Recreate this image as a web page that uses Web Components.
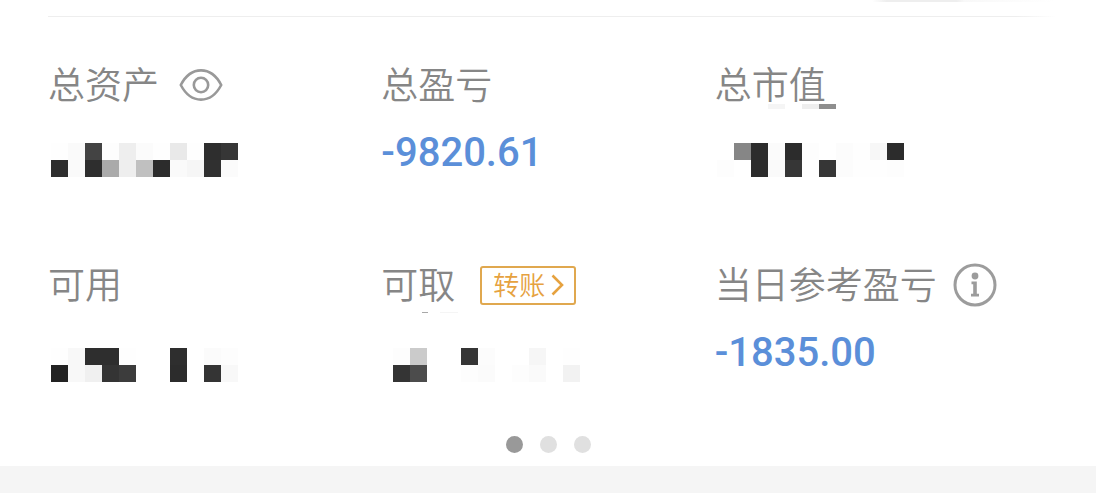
<!DOCTYPE html>
<html lang="zh-CN">
<head>
<meta charset="utf-8">
<meta name="viewport" content="width=device-width, initial-scale=1">
<title>资产概览</title>
<style>
  body { margin: 0; background: #f5f5f5; font-family: "Noto Sans CJK SC", sans-serif; color: #868686; }
</style>
</head>
<body>
<account-panel>
  <asset-item>
    <span slot="label">总资产</span>
    <eye-toggle slot="action"></eye-toggle>
    <masked-amount style="--inset: 3px" rows="fe fa 43 fd ee fb fe e9 fe 2e 36|2e fa 2e aa ee c0 2c fa f6 30 fb"></masked-amount>
  </asset-item>
  <asset-item>
    <span slot="label">总盈亏</span>
    <money-amount>-9820.61</money-amount>
  </asset-item>
  <asset-item>
    <span slot="label">总市值</span>
    <mask-edge slot="overlay" style="--left: 53px; --top: 41px" cells="f5 ff ee 8e"></mask-edge>
    <masked-amount style="--inset: 2px" rows="ff 86 2c fb 2c fd ff fc fe f7 2c|fd ff 2c fa 36 fe 36 fc fe fe fd"></masked-amount>
  </asset-item>
  <asset-item>
    <span slot="label">可用</span>
    <masked-amount style="--inset: 3px; --drop: 17px" rows="fe f8 2e 2e fe ff ff 2e ff fb fd|22 f8 f0 34 3c ff ff 2c ff 34 f8"></masked-amount>
  </asset-item>
  <asset-item>
    <span slot="label">可取</span>
    <transfer-button slot="action">转账</transfer-button>
    <mask-edge slot="overlay" style="--left: 41px; --top: 49px; --cell: 6px; --thick: 1px" cells="a8 ff ff f5 f5 f5"></mask-edge>
    <masked-amount style="--inset: 12px; --drop: 17px" rows="fd cb ff ff 35 fc ff ff f6 ff fe|34 4c ff ff fd fb ff fd fa ff f2"></masked-amount>
  </asset-item>
  <asset-item>
    <span slot="label">当日参考盈亏</span>
    <info-button slot="action"></info-button>
    <money-amount>-1835.00</money-amount>
  </asset-item>
</account-panel>

<script>
  const attach = (host, html) => {
    const root = host.attachShadow({ mode: 'open' });
    const template = document.createElement('template');
    template.innerHTML = html;
    root.append(template.content.cloneNode(true));
    return root;
  };

  customElements.define('account-panel', class extends HTMLElement {
    constructor() {
      super();
      attach(this, `
        <style>
          :host { display: block; background: #fff; padding-bottom: 13px; }
          header { padding: 0 40px 0 48px; }
          .tab { height: 2px; width: 184px; margin: 0 0 14px auto;
            background: linear-gradient(90deg, #fff, #eee 8%, #eee 46%, #f8f8f8 50%, #fff); }
          hr { border: 0; margin: 0; height: 1px; background: linear-gradient(90deg, #eee 96%, #fff); }
          main { display: grid; grid-template-columns: repeat(3, minmax(0, 1fr)); row-gap: 80px; padding: 46px 48px 53px; }
        </style>
        <header><div class="tab"></div><hr></header>
        <main><slot></slot></main>
        <page-dots></page-dots>`);
    }
  });

  customElements.define('asset-item', class extends HTMLElement {
    constructor() {
      super();
      attach(this, `
        <style>
          :host { display: block; position: relative; }
          .label { display: flex; align-items: center; height: 44px; white-space: nowrap; }
          .name { font-size: 37px; font-weight: 350; line-height: 38px; padding-bottom: 4px; }
          .value { height: 52px; margin-top: 24px; }
        </style>
        <div class="label"><div class="name"><slot name="label"></slot></div><slot name="action"></slot></div>
        <slot name="overlay"></slot>
        <div class="value"><slot></slot></div>`);
    }
  });

  customElements.define('money-amount', class extends HTMLElement {
    constructor() {
      super();
      attach(this, `
        <style>
          :host { display: block; font: 500 40px/44px Roboto, sans-serif; color: #5b8fd9; }
        </style><slot></slot>`);
    }
  });

  customElements.define('masked-amount', class extends HTMLElement {
    constructor() {
      super();
      const root = attach(this, `
        <style>
          :host { display: block; padding: var(--drop, 12px) 0 0 var(--inset, 0); }
          div { display: grid; grid-template-columns: repeat(11, 17px); grid-auto-rows: 17px; }
        </style><div role="img" aria-label="金额已隐藏"></div>`);
      const grid = root.querySelector('div');
      for (const tone of this.getAttribute('rows').split(/[ |]/)) {
        const cell = document.createElement('i');
        cell.style.background = '#' + tone.repeat(3);
        grid.append(cell);
      }
    }
  });

  customElements.define('mask-edge', class extends HTMLElement {
    constructor() {
      super();
      const root = attach(this, `
        <style>
          :host { position: absolute; left: var(--left); top: var(--top); display: grid;
            grid-auto-flow: column; grid-auto-columns: var(--cell, 17px); grid-template-rows: var(--thick, 5px); }
        </style>`);
      for (const tone of this.getAttribute('cells').split(' ')) {
        const cell = document.createElement('i');
        if (tone !== 'ff') cell.style.background = '#' + tone.repeat(3);
        root.append(cell);
      }
    }
  });

  customElements.define('eye-toggle', class extends HTMLElement {
    constructor() {
      super();
      attach(this, `
        <style>
          :host { display: flex; margin-left: 20px; }
          button { display: flex; padding: 0; border: 0; background: none; color: #999; }
        </style>
        <button type="button" aria-label="隐藏金额">
          <svg width="44" height="34" viewBox="0 0 44 34" fill="none" stroke="currentColor" stroke-width="2.6">
            <path d="M1.8 17C6.5 8 13.5 2.4 22 2.4S37.500 8 42.200 17C37.500 26 30.500 31.600 22 31.600S6.500 26 1.800 17Z"/>
            <circle cx="22" cy="17" r="7.200"/>
          </svg>
        </button>`);
    }
  });

  customElements.define('transfer-button', class extends HTMLElement {
    constructor() {
      super();
      attach(this, `
        <style>
          :host { display: flex; margin-left: 25px; }
          button { display: flex; align-items: center; gap: 6px; height: 39px; box-sizing: border-box; padding: 0 10px 0 11px;
            border: 2px solid #e0a84f; border-radius: 3px; background: #fff; color: #e6a23f;
            font: 350 26px/30px "Noto Sans CJK SC", sans-serif; }
          span { padding-bottom: 2px; }
        </style>
        <button type="button"><span><slot></slot></span>
          <svg width="13" height="22" viewBox="0 0 13 22" fill="none" stroke="currentColor" stroke-width="2.6"><path d="M1.500 1.500 11 11 1.500 20.500"/></svg>
        </button>`);
    }
  });

  customElements.define('info-button', class extends HTMLElement {
    constructor() {
      super();
      attach(this, `
        <style>
          :host { display: flex; margin-left: 16px; }
          button { display: flex; padding: 0; border: 0; background: none; color: #9c9c9c; }
        </style>
        <button type="button" aria-label="说明">
          <svg width="44" height="44" viewBox="0 0 44 44">
            <circle cx="22" cy="22" r="20" fill="none" stroke="currentColor" stroke-width="3"/>
            <circle cx="22" cy="13" r="3.400" fill="currentColor"/>
            <path d="M18.500 18.500h5.300v12.300h2.200v2.700h-8v-2.700h2.200v-9.600h-1.700Z" fill="currentColor"/>
          </svg>
        </button>`);
    }
  });

  customElements.define('page-dots', class extends HTMLElement {
    constructor() {
      super();
      attach(this, `
        <style>
          :host { display: flex; justify-content: center; gap: 17px; }
          button { width: 17px; height: 17px; padding: 0; border: 0; border-radius: 50%; background: #e0e0e0; }
          button[aria-current] { background: #999; }
        </style>
        <button type="button" aria-label="第1页" aria-current="page"></button>
        <button type="button" aria-label="第2页"></button>
        <button type="button" aria-label="第3页"></button>`);
    }
  });
</script>
</body>
</html>
